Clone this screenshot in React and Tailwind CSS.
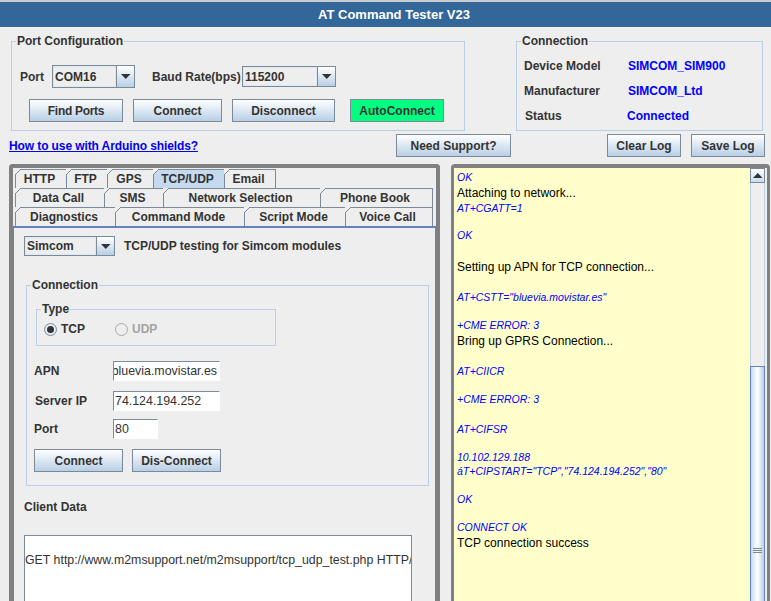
const ui = "font-['Liberation_Sans',Arial,sans-serif]";
const btnClass = 'flex items-center justify-center border border-[#7a8a99] bg-gradient-to-b from-white to-[#b8cfe5] text-xs font-bold text-[#333333]';
const legendClass = 'ml-[4px] px-[1px] text-xs leading-[14px] font-bold text-[#333333]';
const labelClass = 'text-xs font-bold text-[#333333]';

function Arrow() {
  return (
    <svg width="10" height="5" viewBox="0 0 10 5">
      <path d="M0 0H9.5L4.75 5Z" fill="#333333" />
    </svg>
  );
}

function Combo({ value, className }) {
  return (
    <div className={`flex border border-[#7a8a99] ${className}`}>
      <div className="flex min-w-0 flex-1 items-center border border-[#dde8f3] pl-[1px] text-xs font-bold text-[#333333]">
        {value}
      </div>
      <div className="flex w-[18px] items-center justify-center border-l border-[#7a8a99] bg-gradient-to-b from-white to-[#b8cfe5]">
        <Arrow />
      </div>
    </div>
  );
}

function Tab({ label, className, active }) {
  return (
    <div
      className={`relative -mr-px flex h-[19px] shrink-0 items-center justify-center border border-b-0 border-[#7a8a99] pr-[3px] text-xs font-bold text-[#333333] ${active ? 'bg-[#c5daef]' : 'bg-[#eeeeee]'} ${className}`}
    >
      <svg className="absolute -top-px -left-px" width="6" height="6" viewBox="0 0 6 6">
        <path d="M0 0H6L0 6Z" fill="#eeeeee" />
        <path d="M0 6L6 0" stroke="#7a8a99" />
      </svg>
      {label}
    </div>
  );
}

function TextField({ value, className, alignEnd }) {
  return (
    <div
      className={`flex h-[20px] items-center overflow-hidden whitespace-nowrap border border-[#7a8a99] border-r-white border-b-white bg-white pl-[1px] text-[12.4px] text-[#333333] ${alignEnd ? 'justify-end pr-[2px]' : ''} ${className}`}
    >
      {value}
    </div>
  );
}

const logLines = [
  { text: 'OK', cmd: true, gap: 'mt-0' },
  { text: 'Attaching to network...', gap: 'mt-px' },
  { text: 'AT+CGATT=1', cmd: true, gap: 'mt-0' },
  { text: 'OK', cmd: true, gap: 'mt-[13px]' },
  { text: 'Setting up APN for TCP connection...', gap: 'mt-[17px]' },
  { text: 'AT+CSTT="bluevia.movistar.es"', cmd: true, gap: 'mt-[15px]' },
  { text: '+CME ERROR: 3', cmd: true, gap: 'mt-[14px]' },
  { text: 'Bring up GPRS Connection...', gap: 'mt-px' },
  { text: 'AT+CIICR', cmd: true, gap: 'mt-[15px]' },
  { text: '+CME ERROR: 3', cmd: true, gap: 'mt-[14px]' },
  { text: 'AT+CIFSR', cmd: true, gap: 'mt-[16px]' },
  { text: '10.102.129.188', cmd: true, gap: 'mt-[14px]' },
  { text: 'áT+CIPSTART="TCP","74.124.194.252","80"', cmd: true, gap: 'mt-0' },
  { text: 'OK', cmd: true, gap: 'mt-[14px]' },
  { text: 'CONNECT OK', cmd: true, gap: 'mt-[14px]' },
  { text: 'TCP connection success', gap: 'mt-px' },
];

export default function App() {
  return (
    <div className={`flex h-[601px] w-[771px] flex-col overflow-hidden bg-[#eeeeee] ${ui}`}>
      <div className="h-[2px] shrink-0 bg-[#c9ccd0]" />
      <div className="flex h-[25px] shrink-0 items-center justify-center bg-[#336699] pl-[17px] text-[13px] font-bold text-white">
        AT Command Tester V23
      </div>

      {/* top config row */}
      <div className="flex shrink-0 pt-[7px] pl-[11px]">
        <fieldset className="h-[97px] w-[454px] border border-[#b8cfe5]">
          <legend className={legendClass}>Port Configuration</legend>
          <div className="mt-[17px] flex items-center pl-[8px]">
            <span className={`w-[32px] ${labelClass}`}>Port</span>
            <Combo value="COM16" className="h-[23px] w-[83px]" />
            <span className={`ml-[17px] w-[90px] ${labelClass}`}>Baud Rate(bps)</span>
            <Combo value="115200" className="h-[21px] w-[94px]" />
          </div>
          <div className="mt-[11px] flex pl-[17px]">
            <button className={`h-[23px] w-[94px] tracking-[-0.3px] ${btnClass}`}>Find Ports</button>
            <button className={`ml-[10px] h-[23px] w-[89px] ${btnClass}`}>Connect</button>
            <button className={`ml-[10px] h-[23px] w-[103px] ${btnClass}`}>Disconnect</button>
            <button className="ml-[15px] flex h-[23px] w-[94px] items-center justify-center border border-[#7a8a99] bg-[#00ff80] text-xs font-bold text-[#333333]">
              AutoConnect
            </button>
          </div>
        </fieldset>

        <fieldset className="ml-[51px] h-[97px] w-[247px] border border-[#b8cfe5]">
          <legend className={legendClass}>Connection</legend>
          <div className="mt-[5px] flex h-[25px] items-center pl-[7px]">
            <span className={`w-[104px] ${labelClass}`}>Device Model</span>
            <span className="text-xs font-bold text-[#0000ff]">SIMCOM_SIM900</span>
          </div>
          <div className="flex h-[25px] items-center pl-[7px]">
            <span className={`w-[104px] ${labelClass}`}>Manufacturer</span>
            <span className="text-xs font-bold text-[#0000ff]">SIMCOM_Ltd</span>
          </div>
          <div className="flex h-[25px] items-center pl-[8px]">
            <span className={`w-[102px] ${labelClass}`}>Status</span>
            <span className="text-xs font-bold text-[#0000ff]">Connected</span>
          </div>
        </fieldset>
      </div>

      {/* link + support / log buttons */}
      <div className="mt-[3px] flex h-[23px] shrink-0 items-center pl-[9px]">
        <div className="-mt-px w-[387px] shrink-0">
          <a href="#" className="text-xs font-bold tracking-[-0.1px] text-[#0000ee] underline">How to use with Arduino shields?</a>
        </div>
        <button className={`h-[23px] w-[115px] ${btnClass}`}>Need Support?</button>
        <button className={`ml-[96px] h-[23px] w-[74px] ${btnClass}`}>Clear Log</button>
        <button className={`ml-[10px] h-[23px] w-[74px] ${btnClass}`}>Save Log</button>
      </div>

      <div className="mt-[7px] flex min-h-0 flex-1 pl-[9px]">
        {/* left tabbed panel */}
        <div className="flex w-[431px] shrink-0 flex-col rounded-t-[4px] border-[4px] border-b-0 border-[#808080] pt-[1px]">
          <div className="flex pl-[2px]">
            <Tab label="HTTP" className="w-[52px]" />
            <Tab label="FTP" className="w-[42px]" />
            <Tab label="GPS" className="w-[47px]" />
            <Tab label="TCP/UDP" className="w-[72px]" active />
            <Tab label="Email" className="w-[52px]" />
          </div>
          <div className="flex pl-[2px]">
            <Tab label="Data Call" className="w-[90px]" />
            <Tab label="SMS" className="w-[60px]" />
            <Tab label="Network Selection" className="w-[158px]" />
            <Tab label="Phone Book" className="w-[113px]" />
          </div>
          <div className="flex pl-[2px]">
            <Tab label="Diagnostics" className="w-[101px]" />
            <Tab label="Command Mode" className="w-[130px]" />
            <Tab label="Script Mode" className="w-[102px]" />
            <Tab label="Voice Call" className="w-[88px]" />
          </div>

          <div className="min-h-0 flex-1 border-x border-t-2 border-[#6382bf] pt-[8px] pl-[10px]">
            <div className="flex items-center">
              <Combo value="Simcom" className="h-[20px] w-[91px]" />
              <span className={`ml-[9px] ${labelClass}`}>TCP/UDP testing for Simcom modules</span>
            </div>

            <fieldset className="mt-[22px] ml-[2px] h-[208px] w-[403px] border border-[#b8cfe5]">
              <legend className={legendClass}>Connection</legend>
              <div className="pl-[7px]">
                <fieldset className="mt-[10px] ml-[2px] h-[44px] w-[240px] border border-[#b8cfe5]">
                  <legend className={legendClass}>Type</legend>
                  <div className="mt-[5px] flex items-center pl-[7px]">
                    <svg width="13" height="13" viewBox="0 0 13 13">
                      <circle cx="6.5" cy="6.5" r="6" fill="#e4edf6" stroke="#7a8a99" />
                      <circle cx="6.5" cy="6.5" r="3.5" fill="#333333" />
                    </svg>
                    <span className={`ml-[4px] w-[54px] ${labelClass}`}>TCP</span>
                    <svg width="13" height="13" viewBox="0 0 13 13">
                      <circle cx="6.5" cy="6.5" r="6" fill="#eeeeee" stroke="#a8a8a8" />
                    </svg>
                    <span className="ml-[4px] text-xs font-bold text-[#a3a3a3]">UDP</span>
                  </div>
                </fieldset>

                <div className="mt-[15px] flex items-center">
                  <span className={`w-[79px] ${labelClass}`}>APN</span>
                  <TextField value="bluevia.movistar.es" className="w-[107px]" alignEnd />
                </div>
                <div className="mt-[10px] flex items-center">
                  <span className={`w-[79px] pl-[1px] ${labelClass}`}>Server IP</span>
                  <TextField value="74.124.194.252" className="w-[107px]" />
                </div>
                <div className="mt-[8px] flex items-center">
                  <span className={`w-[79px] ${labelClass}`}>Port</span>
                  <TextField value="80" className="w-[45px]" />
                </div>
                <div className="mt-[10px] flex">
                  <button className={`h-[23px] w-[89px] ${btnClass}`}>Connect</button>
                  <button className={`ml-[9px] h-[23px] w-[89px] ${btnClass}`}>Dis-Connect</button>
                </div>
              </div>
            </fieldset>

            <div className={`mt-[13px] ${labelClass}`}>Client Data</div>
            <div className="mt-[20px] h-[70px] w-[388px] overflow-hidden whitespace-nowrap border border-[#7a8a99] bg-white pt-[15px] text-[12.35px] text-[#333333]">
              GET http://www.m2msupport.net/m2msupport/tcp_udp_test.php HTTP/1.1
            </div>
          </div>
        </div>

        {/* log panel */}
        <div className="ml-[11px] flex w-[319px] shrink-0 overflow-hidden rounded-t-[4px] border-[3px] border-t-4 border-b-0 border-[#808080]">
          <div className="min-w-0 flex-1 bg-[#ffffcc] pt-[2px] pl-[3px]">
            {logLines.map((line, i) => (
              <div
                key={i}
                className={line.cmd
                  ? `h-[14px] text-[10.5px] leading-[14px] text-[#0000ff] italic ${line.gap}`
                  : `h-[16px] text-xs leading-[16px] text-black ${line.gap}`}
              >
                {line.text}
              </div>
            ))}
          </div>
          <div className="w-[17px] shrink-0 pr-[2px]">
            <div className="flex h-[15px] items-center justify-center border border-[#7a8a99] bg-gradient-to-b from-white to-[#c9dcee]">
              <svg width="10" height="5" viewBox="0 0 10 5">
                <path d="M0 5H9.5L4.75 0Z" fill="#333333" />
              </svg>
            </div>
            <div className="h-[183px] border-x border-[#b8cfe5]" />
            <div className="flex h-[368px] flex-col items-center justify-center gap-[1px] border border-[#6382bf] bg-gradient-to-r from-[#c9dcee] via-white to-[#b8cfe5]">
              <div className="h-px w-[9px] bg-[#7a8a99]" />
              <div className="h-px w-[9px] bg-[#7a8a99]" />
              <div className="h-px w-[9px] bg-[#7a8a99]" />
            </div>
          </div>
        </div>
      </div>
    </div>
  );
}
